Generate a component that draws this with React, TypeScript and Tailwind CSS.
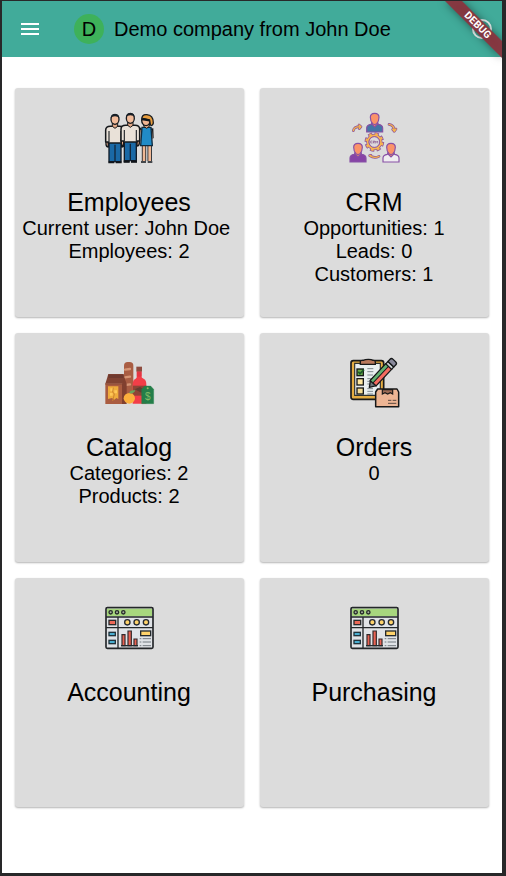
import React from "react";

const frame = { viewBox: "0 0 189 192", className: "block h-16 w-[63px]" };

function Man({ x, y }: { x: number; y: number }) {
  return (
    <g transform={`translate(${x} ${y})`} strokeLinejoin="round">
      <path d="M-27 80V92Q-26 100-20 100V80ZM27 80V92Q26 100 20 100V80Z" fill="#e9ad8c" stroke="#15181c" strokeWidth="4" />
      <path d="M-18 82H18V144H-18Z" fill="#1a69a6" stroke="#111b28" strokeWidth="4" />
      <path d="M0 93V145" stroke="#13263a" strokeWidth="4" />
      <path d="M-28 85V50Q-28 38-14 38H14Q28 38 28 50V85H20V88H-20V85Z" fill="#e9e1d8" stroke="#15181c" strokeWidth="4.5" />
      <path d="M-18 52V86M18 52V86" stroke="#25282c" strokeWidth="3.5" />
      <path d="M-8 29H8V38L0 44L-8 38Z" fill="#e4a987" stroke="#1b1b1c" strokeWidth="3" />
      <ellipse cy="17" rx="12" ry="15" fill="#f2bc9b" stroke="#191c20" strokeWidth="4" />
      <path d="M-13 14Q-13 1 0 1T13 14Q9 8 0 8T-13 14Z" fill="#171e26" />
      <path d="M-20 146H-2M2 146H20" stroke="#11151a" strokeWidth="5" />
    </g>
  );
}

function EmployeesIcon() {
  return (
    <svg {...frame}>
      <path d="M130 70L121 80V100M162 70L163 100" stroke="#171a1e" strokeWidth="8" fill="none" />
      <path d="M130 75L123 85V101M160 75L162 99" stroke="#e7ac88" strokeWidth="4" fill="none" />
      <path d="M138 119V168M155 119V168" stroke="#171b20" strokeWidth="13" />
      <path d="M138 119V168M155 119V168" stroke="#f0b895" strokeWidth="8" />
      <path d="M132 67H159L163 122H128Z" fill="#218bc7" stroke="#112b3e" strokeWidth="4" />
      <path d="M137 52V64L146 70L154 64V52Z" fill="#e7ac88" stroke="#1b1b1b" strokeWidth="3" />
      <ellipse cx="144" cy="46" rx="13" ry="16" fill="#f0b592" stroke="#171a1e" strokeWidth="4" />
      <path d="M132 44Q130 28 146 29Q166 30 166 54Q163 65 157 59L155 46L140 42Z" fill="#e79d3e" stroke="#171a1e" strokeWidth="4" />
      <path d="M133 42L155 46" stroke="#10161b" strokeWidth="7" />
      <path d="M129 171H144M149 171H163" stroke="#13171d" strokeWidth="5" />
      <Man x={51} y={26} />
      <Man x={97} y={23} />
      <path d="M77 171H95M99 171H117" stroke="#11151a" strokeWidth="4" />
    </svg>
  );
}

function Person({ x, y, shirt }: { x: number; y: number; shirt: string }) {
  return (
    <g transform={`translate(${x} ${y})`} stroke="#8750a5" strokeWidth="3.5">
      <path d="M-24 58V46Q-24 37-11 35L-8 30H8L11 35Q24 37 24 46V58Z" fill={shirt} />
      <path d="M-9 28V34L0 43L9 34V28" fill="#f28a63" />
      <path d="M-13 14Q-13 2 0 2T13 14Q13 26 6 33Q0 38-6 33Q-13 26-13 14Z" fill="#fb9369" />
    </g>
  );
}

function CrmIcon() {
  return (
    <svg {...frame}>
      <Person x={95} y={23} shirt="#4475a5" />
      <Person x={45} y={113} shirt="#8744a6" />
      <Person x={144} y={113} shirt="#efedf0" />
      <g fill="none" strokeLinecap="round" strokeLinejoin="round">
        <g stroke="#8d539a" strokeWidth="8">
          <path d="M31 77Q33 65 51 65M48 60L54 65L49 71M138 58Q153 60 154 76M149 73L154 79L159 72M80 152Q94 161 108 154M80 152L84 151" />
        </g>
        <g stroke="#f6b64a" strokeWidth="4">
          <path d="M31 77Q33 65 51 65M48 60L54 65L49 71M138 58Q153 60 154 76M149 73L154 79L159 72M80 152Q94 161 108 154M80 152L84 151" />
        </g>
      </g>
      <circle cx="94" cy="111" r="24" fill="none" stroke="#8e559d" strokeWidth="11" strokeDasharray="12 6.85" />
      <circle cx="94" cy="111" r="20" fill="#ddd9dc" stroke="#8e559d" strokeWidth="9" />
      <circle cx="94" cy="111" r="24" fill="none" stroke="#f7b34f" strokeWidth="6" strokeDasharray="8 10.85" strokeDashoffset="-2" />
      <circle cx="94" cy="111" r="20" fill="none" stroke="#f8b550" strokeWidth="5" />
      <circle cx="94" cy="111" r="16" fill="none" stroke="#8e559d" strokeWidth="2.5" />
      <g fill="none" stroke="#926795" strokeWidth="2.3">
        <path d="M88 108H83V114H88M91 115V108H95V111H91L95 115M98 115V108L101 112L104 108V115" />
      </g>
    </svg>
  );
}

function CatalogIcon() {
  return (
    <svg {...frame}>
      <rect x="78" y="36" width="28" height="106" rx="11" fill="#a95d43" />
      <path d="M81 59L96 57M81 82L96 80M81 105L96 103" stroke="#d69575" strokeWidth="7" strokeLinecap="round" />
      <path d="M117 64H130V79Q130 84 138 87Q145 91 145 103V161H104V103Q104 90 113 86Q117 83 117 79Z" fill="#f23e48" />
      <path d="M115 50H132V65H115Z" fill="#8e4c3f" />
      <path d="M116 65H131V80H116Z" fill="#e63542" />
      <path d="M105 107H145V137H105Z" fill="#8e4436" />
      <path d="M110 118L126 111L139 119L130 128Z" fill="#633d31" />
      <path d="M31 72H77L83 101H22Z" fill="#804232" />
      <path d="M22 101H72V162H22Z" fill="#aa5c40" />
      <path d="M72 101L79 83L86 101V162H72Z" fill="#81402f" />
      <path d="M31 74H76V84H31Z" fill="#6f392e" />
      <path d="M22 100H72V104H22Z" fill="#92513b" />
      <path d="M30 109H61V147L55 144L49 149L42 144L30 147Z" fill="#efac3d" />
      <path d="M37 115H46V124H37ZM49 121H57V130H49ZM36 129H44V137H36Z" fill="#ffc858" />
      <path d="M46 113L44 126L49 132L44 153" stroke="#ce842e" strokeWidth="3" fill="none" />
      <ellipse cx="94" cy="145" rx="17" ry="16" fill="#fcaf3c" />
      <path d="M94 130Q95 119 112 121Q109 132 94 130Z" fill="#68a65a" />
      <path d="M131 118L140 108H158L167 118V161H131Z" fill="#247e49" stroke="#247e49" strokeLinejoin="round" />
      <circle cx="149" cy="115" r="3" fill="#8fbb67" />
      <text x="149" y="149" textAnchor="middle" fontSize="30" fontFamily="Liberation Sans, sans-serif" fill="#83bd67">$</text>
    </svg>
  );
}

function OrdersIcon() {
  return (
    <svg {...frame}>
      <rect x="24" y="32" width="98" height="116" rx="7" fill="#e5ad42" stroke="#191919" strokeWidth="5" />
      <path d="M35 40H112V136H35Z" fill="#e9eeef" stroke="#30332f" strokeWidth="3.5" />
      <path d="M52 42V34Q52 31 58 31H62Q66 28 76 28Q86 28 89 31H92Q97 31 97 36V43H52Z" fill="#b9785c" stroke="#171819" strokeWidth="4" />
      <g stroke="#171917" strokeWidth="4">
        <rect x="42" y="57" width="19" height="20" fill="#6aab4a" />
        <rect x="42" y="86" width="19" height="19" fill="#ffe6a0" />
        <rect x="42" y="114" width="19" height="18" fill="#f5dc94" />
      </g>
      <path d="M46 65L51 71L63 59" fill="none" stroke="#1b5828" strokeWidth="5" />
      <path d="M73 56H91M73 65H91M73 75H90M73 86H88M73 94H81M73 102H80M73 116H90M73 124H90M73 132H90" stroke="#7d868b" strokeWidth="3" />
      <g transform="translate(79 112) rotate(-47)" stroke="#161819" strokeWidth="4" strokeLinejoin="round">
        <path d="M0 0L18-12V12Z" fill="#73787d" />
        <path d="M17-12H86V12H17Z" fill="#f56b60" />
        <path d="M17-12H86V-1H17Z" fill="#63b172" strokeWidth="3" />
        <path d="M85-12H95V12H85Z" fill="#cdd3d6" />
        <path d="M95-12H104Q110-12 110-5V5Q110 12 104 12H95Z" fill="#89899b" />
      </g>
      <path d="M104 117H162L167 126V170H98V126Z" fill="#edb594" stroke="#171819" strokeWidth="4.5" strokeLinejoin="round" />
      <path d="M118 119H149V132L142 128L134 132L126 128L118 132Z" fill="#9d6b54" stroke="#1b1a19" strokeWidth="3.5" />
      <path d="M135 151H145M149 151H160M135 160H160" stroke="#3c332e" strokeWidth="2.5" />
    </svg>
  );
}

function ReportIcon() {
  return (
    <svg {...frame}>
      <rect x="24" y="38" width="141" height="122" rx="4" fill="#e0e3e7" stroke="#24272a" strokeWidth="5" />
      <path d="M27 41H162V64H27Z" fill="#a7d77e" />
      <path d="M24 66H165M24 98H165M60 66V159" stroke="#24282b" strokeWidth="4" />
      <g fill="#a6b19e" stroke="#252b29" strokeWidth="4">
        <circle cx="38" cy="52" r="5" /><circle cx="57" cy="52" r="5" /><circle cx="76" cy="52" r="5" />
      </g>
      <rect x="33" y="76" width="20" height="13" fill="#ec6857" stroke="#292a2c" strokeWidth="4" />
      <g fill="#ffd36b" stroke="#252930" strokeWidth="4">
        <circle cx="88" cy="82" r="8" /><circle cx="116" cy="82" r="8" /><circle cx="144" cy="82" r="8" />
      </g>
      <g fill="#49add0" stroke="#20323b" strokeWidth="4">
        <rect x="33" y="112" width="19" height="10" /><rect x="33" y="136" width="19" height="10" />
      </g>
      <g fill="#e96253" stroke="#31292b" strokeWidth="3.5">
        <path d="M72 119H81V152H72ZM90 108H100V152H90ZM108 132H117V152H108Z" />
      </g>
      <path d="M69 152H120" stroke="#25292c" strokeWidth="4" />
      <rect x="128" y="108" width="30" height="14" fill="#ffd36b" stroke="#252a2d" strokeWidth="4" />
      <path d="M125 131H130M134 131H159M125 141H130M134 141H159M125 152H130M134 152H159" stroke="#737a80" strokeWidth="3" />
    </svg>
  );
}

const cards = [
  { title: "Employees", lines: ["Current user: John Doe\u00a0", "Employees: 2"], Icon: EmployeesIcon },
  { title: "CRM", lines: ["Opportunities: 1", "Leads: 0", "Customers: 1"], Icon: CrmIcon },
  { title: "Catalog", lines: ["Categories: 2", "Products: 2"], Icon: CatalogIcon },
  { title: "Orders", lines: ["0"], Icon: OrdersIcon },
  { title: "Accounting", lines: [], Icon: ReportIcon },
  { title: "Purchasing", lines: [], Icon: ReportIcon },
];

export default function App() {
  return (
    <div className="h-[876px] w-[506px] bg-[#282829] pl-0.5 pt-px font-['Liberation_Sans',Arial,sans-serif] text-black">
      <div className="relative h-[872px] w-[500px] overflow-hidden bg-white">
        <header className="flex h-14 items-center bg-[#41ab9a]">
          <button aria-label="Menu" className="ml-[19px] flex w-[18px] flex-col gap-[3px]">
            <span className="h-0.5 w-full bg-white" />
            <span className="h-0.5 w-full bg-white" />
            <span className="h-0.5 w-full bg-white" />
          </button>
          <div className="ml-[35px] flex size-[30px] items-center justify-center rounded-full bg-[#3eb15a] text-xl">D</div>
          <h1 className="ml-2.5 whitespace-nowrap text-xl">Demo company from John Doe</h1>
          <div className="ml-auto mr-[10px] size-5 rounded-full border-2 border-[#eef6f5]" />
        </header>
        <svg className="absolute right-0 top-0" width="76" height="76" viewBox="0 0 76 76">
          <path d="M19 0H36L76 40V57Z" fill="#8c323d" fillOpacity=".92" style={{ filter: "drop-shadow(0 0 4px rgba(0,0,0,.5))" }} />
          <text x="52" y="27.5" transform="rotate(45 52 24)" textAnchor="middle" fontFamily="Roboto, sans-serif" fontWeight="700" fontSize="10.2" letterSpacing=".1" fill="#fff">DEBUG</text>
        </svg>
        <main className="grid grid-cols-[229px_229px] gap-4 px-[13px] pt-[31px]">
          {cards.map(({ title, lines, Icon }) => (
            <section key={title} className="flex h-[229px] flex-col items-center rounded-[3px] bg-[#dcdcdc] pt-[17px] shadow-[0_1px_2px_rgba(0,0,0,0.3)]">
              <Icon />
              <h2 className="mt-[19px] pr-px text-[25px] leading-[29px]">{title}</h2>
              {lines.map((line) => (
                <p key={line} className="whitespace-nowrap pr-px text-xl leading-[23px]">{line}</p>
              ))}
            </section>
          ))}
        </main>
      </div>
    </div>
  );
}
